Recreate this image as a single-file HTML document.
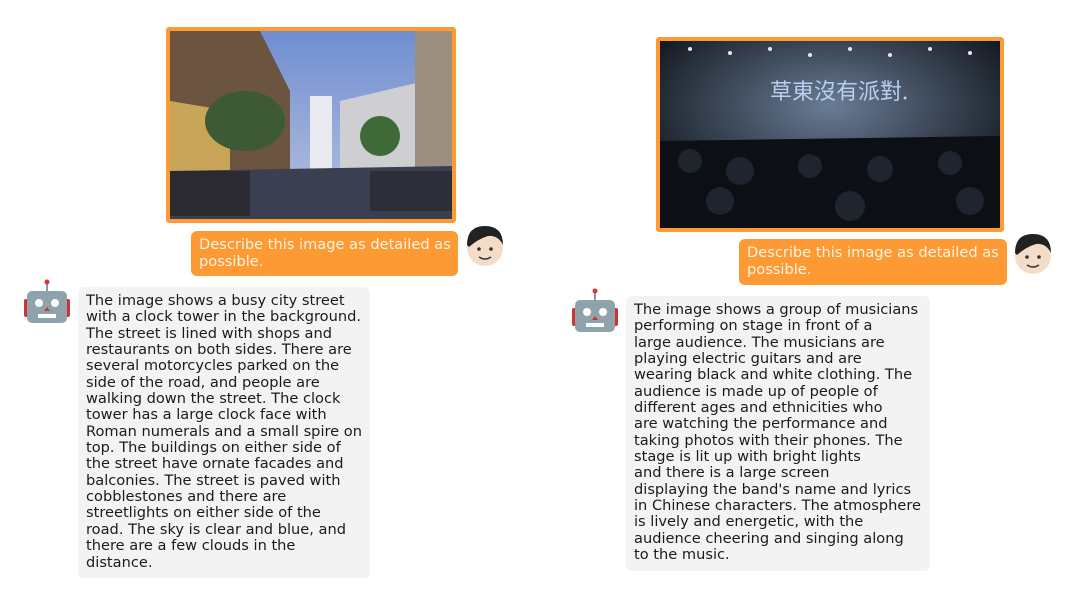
<!DOCTYPE html>
<html><head><meta charset="utf-8"><style>
body{margin:0;width:1080px;height:615px;background:#fff;position:relative;overflow:hidden;font-family:"DejaVu Sans","Liberation Sans",sans-serif;}
.frame{position:absolute;border:4px solid #fd9a33;border-radius:3px;box-sizing:border-box;overflow:hidden}
.ub{position:absolute;background:#fd9a33;color:#fff3e3;border-radius:6px;font-size:14.6px;line-height:17px;padding:5px 8px;box-sizing:border-box;white-space:pre}
.bb{position:absolute;background:#f3f3f3;color:#1b1b1b;border-radius:6px;font-size:14.6px;line-height:16.35px;padding:6px 8px;box-sizing:border-box;white-space:pre}
.av{position:absolute}
</style></head><body>

<div class="frame" style="left:166px;top:27px;width:290px;height:196px">
<svg width="282" height="188" viewBox="0 0 282 188">
<defs><linearGradient id="sk" x1="0" y1="0" x2="0" y2="1"><stop offset="0" stop-color="#6f8ed0"/><stop offset="1" stop-color="#b9c3e0"/></linearGradient></defs>
<rect width="282" height="188" fill="url(#sk)"/>
<polygon points="0,0 90,0 120,60 120,150 0,160" fill="#6b5440"/>
<polygon points="0,70 60,80 60,150 0,160" fill="#c9a55a"/>
<rect x="140" y="65" width="22" height="90" fill="#e8eaf0"/>
<polygon points="170,70 255,50 260,150 170,150" fill="#cfcfd3"/>
<rect x="245" y="0" width="37" height="150" fill="#9c8e80"/>
<ellipse cx="75" cy="90" rx="40" ry="30" fill="#3d5a35"/>
<ellipse cx="210" cy="105" rx="20" ry="20" fill="#3f6a38"/>
<polygon points="0,140 282,135 282,188 0,188" fill="#3b3f52"/>
<rect x="0" y="140" width="80" height="45" fill="#2a2a30"/>
<rect x="200" y="140" width="82" height="40" fill="#2e2e38"/>
</svg></div>

<div class="frame" style="left:656px;top:37px;width:348px;height:195px">
<svg width="340" height="187" viewBox="0 0 340 187">
<defs><radialGradient id="st" cx="0.5" cy="0.35" r="0.6"><stop offset="0" stop-color="#6a7c95"/><stop offset="1" stop-color="#141a22"/></radialGradient></defs>
<rect width="340" height="187" fill="url(#st)"/>
<g fill="#e0e8ff"><circle cx="30" cy="8" r="2"/><circle cx="70" cy="12" r="2"/><circle cx="110" cy="8" r="2"/><circle cx="150" cy="14" r="2"/><circle cx="190" cy="8" r="2"/><circle cx="230" cy="14" r="2"/><circle cx="270" cy="8" r="2"/><circle cx="310" cy="12" r="2"/></g>
<text x="110" y="58" font-size="22" fill="#b8d0f0" font-family="Noto Sans CJK SC,sans-serif">草東沒有派對.</text>
<polygon points="0,100 340,95 340,187 0,187" fill="#0c0f14"/>
<g fill="#1e252e"><circle cx="30" cy="120" r="12"/><circle cx="80" cy="130" r="14"/><circle cx="150" cy="125" r="12"/><circle cx="220" cy="128" r="13"/><circle cx="290" cy="122" r="12"/><circle cx="60" cy="160" r="14"/><circle cx="190" cy="165" r="15"/><circle cx="310" cy="160" r="14"/></g>
</svg></div>

<div class="ub" style="left:191px;top:231px;width:267px;height:45px">Describe this image as detailed as
possible.</div>
<div class="ub" style="left:739px;top:239px;width:268px;height:46px">Describe this image as detailed as
possible.</div>

<svg class="av" style="left:464px;top:223px" width="42" height="46" viewBox="0 0 42 46">
<circle cx="21" cy="25" r="18" fill="#f4ddc8"/><path d="M3 22 Q3 3 21 3 Q39 3 39 22 Q34 12 24 13 Q14 16 5 24Z" fill="#222"/>
<circle cx="15" cy="26" r="1.8" fill="#333"/><circle cx="27" cy="26" r="1.8" fill="#333"/><path d="M15 34 Q21 38 27 34" stroke="#333" stroke-width="1.5" fill="none"/></svg>
<svg class="av" style="left:1012px;top:231px" width="42" height="46" viewBox="0 0 42 46">
<circle cx="21" cy="25" r="18" fill="#f4ddc8"/><path d="M3 22 Q3 3 21 3 Q39 3 39 22 Q34 12 24 13 Q14 16 5 24Z" fill="#222"/>
<circle cx="15" cy="26" r="1.8" fill="#333"/><circle cx="27" cy="26" r="1.8" fill="#333"/><path d="M15 34 Q21 38 27 34" stroke="#333" stroke-width="1.5" fill="none"/></svg>

<svg class="av" style="left:23px;top:279px" width="48" height="46" viewBox="0 0 48 46">
<line x1="24" y1="3" x2="24" y2="12" stroke="#8a9aa4" stroke-width="2"/><circle cx="24" cy="3" r="2.5" fill="#d33"/>
<rect x="1" y="20" width="6" height="18" rx="2" fill="#c33"/><rect x="41" y="20" width="6" height="18" rx="2" fill="#c33"/>
<rect x="4" y="12" width="40" height="32" rx="5" fill="#8fa3ad"/>
<circle cx="16" cy="24" r="4" fill="#fff"/><circle cx="32" cy="24" r="4" fill="#fff"/><polygon points="24,28 21,32 27,32" fill="#c33"/><rect x="15" y="35" width="18" height="4" fill="#fff"/></svg>
<svg class="av" style="left:571px;top:288px" width="48" height="46" viewBox="0 0 48 46">
<line x1="24" y1="3" x2="24" y2="12" stroke="#8a9aa4" stroke-width="2"/><circle cx="24" cy="3" r="2.5" fill="#d33"/>
<rect x="1" y="20" width="6" height="18" rx="2" fill="#c33"/><rect x="41" y="20" width="6" height="18" rx="2" fill="#c33"/>
<rect x="4" y="12" width="40" height="32" rx="5" fill="#8fa3ad"/>
<circle cx="16" cy="24" r="4" fill="#fff"/><circle cx="32" cy="24" r="4" fill="#fff"/><polygon points="24,28 21,32 27,32" fill="#c33"/><rect x="15" y="35" width="18" height="4" fill="#fff"/></svg>

<div class="bb" style="left:78px;top:287px;width:292px;height:291px">The image shows a busy city street
with a clock tower in the background.
The street is lined with shops and
restaurants on both sides. There are
several motorcycles parked on the
side of the road, and people are
walking down the street. The clock
tower has a large clock face with
Roman numerals and a small spire on
top. The buildings on either side of
the street have ornate facades and
balconies. The street is paved with
cobblestones and there are
streetlights on either side of the
road. The sky is clear and blue, and
there are a few clouds in the
distance.</div>

<div class="bb" style="left:626px;top:296px;width:304px;height:275px">The image shows a group of musicians
performing on stage in front of a
large audience. The musicians are
playing electric guitars and are
wearing black and white clothing. The
audience is made up of people of
different ages and ethnicities who
are watching the performance and
taking photos with their phones. The
stage is lit up with bright lights
and there is a large screen
displaying the band's name and lyrics
in Chinese characters. The atmosphere
is lively and energetic, with the
audience cheering and singing along
to the music.</div>
</body></html>
